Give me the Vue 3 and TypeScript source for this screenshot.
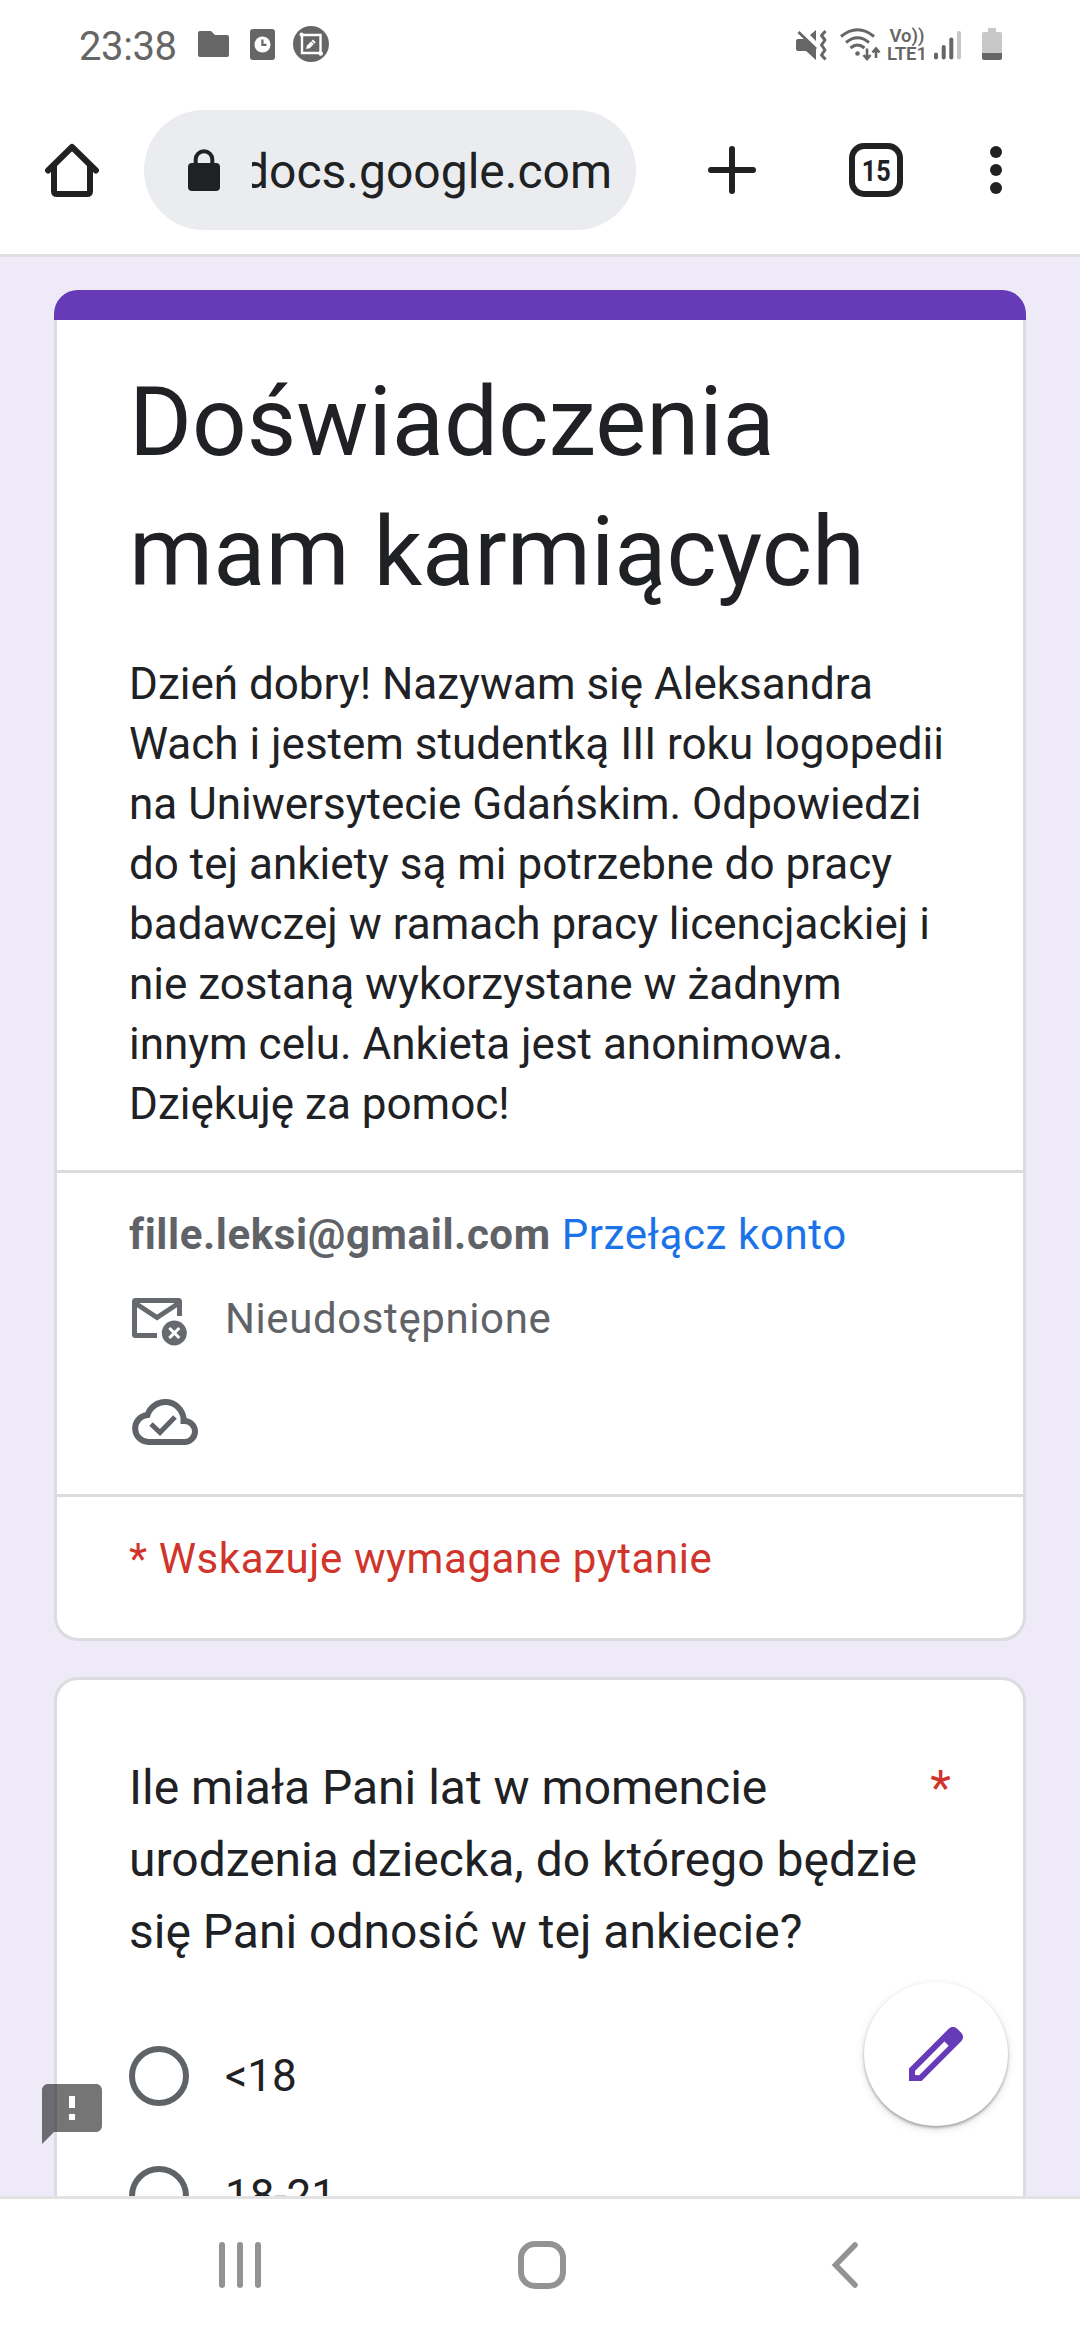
<script setup lang="ts">
const answers: string[] = ['<18', '18-21']
const tabCount = 15
</script>

<template>
  <div class="screen">
    <header class="status">
      <span class="clock">23:38</span>
      <svg class="folder" width="31" height="26" viewBox="0 0 31 26">
        <path d="M2 0H13L17 4H29Q31 4 31 6V24Q31 26 29 26H2Q0 26 0 24V2Q0 0 2 0Z" fill="#666" />
      </svg>
      <svg class="file" width="25" height="31" viewBox="0 0 25 31">
        <rect width="25" height="31" rx="3" fill="#666" />
        <circle cx="12.5" cy="15.5" r="8" fill="#fff" />
        <path d="M12.4 10.5V15.8H16.5" fill="none" stroke="#666" stroke-width="2.2" />
      </svg>
      <svg class="crop" width="36" height="36" viewBox="0 0 36 36">
        <circle cx="18" cy="18" r="18" fill="#666" />
        <path d="M7 9H27.5V27M9 7V27H28" fill="none" stroke="#fff" stroke-width="2.4" />
        <circle cx="8.5" cy="8.5" r="2" fill="#fff" />
        <circle cx="27.7" cy="27.5" r="2.3" fill="#fff" />
        <path d="M13 23L14 19.5L20 13.5L22.7 16.2L16.7 22.2Z" fill="#fff" />
        <path d="M18.3 15.2L21 17.9" stroke="#666" stroke-width="1" />
      </svg>
      <span class="spacer"></span>
      <svg class="mute" width="32" height="32" viewBox="0 0 32 32">
        <path d="M0 12Q0 10 2 10H8L20 19V31L10 22H2Q0 22 0 20ZM14 6L20 1V12Z" fill="#666" />
        <path d="M2.5 3L20 20" stroke="#666" stroke-width="2.8" />
        <path d="M29.5 2L25.5 6.5L29 11L25.5 16L29 21L25.5 26L29.5 30.5" fill="none" stroke="#666" stroke-width="3" stroke-linejoin="round" />
      </svg>
      <svg class="wifi" width="41" height="34" viewBox="0 0 41 34">
        <g fill="none" stroke="#666" stroke-width="3">
          <path d="M1 8.5Q17.5 -5 34 8.5" />
          <path d="M6 14.5Q17.5 5 29 14.5" />
          <path d="M10.5 20Q17.5 14 24.5 20" />
        </g>
        <circle cx="17.5" cy="25.5" r="2.3" fill="#666" />
        <path d="M27 20.5V31M23.5 27L27 31L30.5 27M36 30V20.5M32.5 24.5L36 20.5L39.5 24.5" fill="none" stroke="#666" stroke-width="2.6" />
      </svg>
      <div class="lte"><span>Vo))</span><span>LTE1</span></div>
      <svg class="signal" width="27" height="29" viewBox="0 0 27 29">
        <g fill="#666">
          <rect y="21.5" width="4" height="7" rx="2" />
          <rect x="7.7" y="14" width="4" height="14.5" rx="2" />
          <rect x="15.3" y="6.5" width="4" height="22" rx="2" />
        </g>
        <rect x="23" y="0" width="4" height="28.5" rx="2" fill="#c6c6c6" />
      </svg>
      <svg class="battery" width="20" height="32" viewBox="0 0 20 32">
        <path d="M6 0H14V4H18.500Q20 4 20 6V25H0V6Q0 4 1.500 4H6Z" fill="#c8c8c8" />
        <path d="M0 25H20V30Q20 32 18 32H2Q0 32 0 30Z" fill="#666" />
      </svg>
    </header>

    <div class="toolbar">
      <svg class="home" width="54" height="54" viewBox="0 0 54 54">
        <path d="M3 27.500L27 4L51 27.500" fill="none" stroke="#202122" stroke-width="6" stroke-linecap="round" stroke-linejoin="round" />
        <path d="M9 23V48Q9 51 12 51H42Q45 51 45 48V23" fill="none" stroke="#202122" stroke-width="6" />
      </svg>
      <div class="address">
        <svg width="32" height="42" viewBox="0 0 32 42">
          <path d="M7.700 16V10.500A8.300 8.300 0 0 1 24.300 10.500V16" fill="none" stroke="#202122" stroke-width="4" />
          <rect y="14" width="32" height="28" rx="4" fill="#202122" />
        </svg>
        <div class="url"><span>docs.google.com</span></div>
      </div>
      <svg class="plus" width="48" height="48" viewBox="0 0 48 48">
        <path d="M24 3V45M3 24H45" stroke="#202122" stroke-width="6" stroke-linecap="round" />
      </svg>
      <div class="tabs"><span>{{ tabCount }}</span></div>
      <div class="more"><i></i><i></i><i></i></div>
    </div>

    <main class="page">
      <section class="card">
        <div class="accent"></div>
        <div class="intro">
          <h1>Doświadczenia<br />mam karmiących</h1>
          <p>
            Dzień dobry! Nazywam się Aleksandra<br />
            Wach i jestem studentką III roku logopedii<br />
            na Uniwersytecie Gdańskim. Odpowiedzi<br />
            do tej ankiety są mi potrzebne do pracy<br />
            badawczej w ramach pracy licencjackiej i<br />
            nie zostaną wykorzystane w żadnym<br />
            innym celu. Ankieta jest anonimowa.<br />
            Dziękuję za pomoc!
          </p>
        </div>
        <div class="account">
          <div class="user"><b>fille.leksi@gmail.com</b><a>Przełącz konto</a></div>
          <div class="shared">
            <svg width="60" height="54" viewBox="0 0 60 54">
              <path d="M50.500 24V9.500Q50.500 8.500 49.500 8.500H6.500Q5.500 8.500 5.500 9.500V42.500Q5.500 43.500 6.500 43.500H28" fill="none" stroke="#666a6e" stroke-width="5" />
              <path d="M6 11L28 25.500L50 11" fill="none" stroke="#666a6e" stroke-width="5" />
              <circle cx="45.300" cy="41" r="12.500" fill="#666a6e" />
              <path d="M40.300 36L50.300 46M50.300 36L40.300 46" stroke="#fff" stroke-width="3" />
            </svg>
            <span>Nieudostępnione</span>
          </div>
          <svg class="cloud" width="72" height="60" viewBox="0 0 72 60">
            <path d="M55.500 51H19.500A13.500 13.500 0 0 1 18.500 24.050A18.500 18.500 0 0 1 54.500 27V30H55.500A10.500 10.500 0 0 1 55.500 51Z" fill="none" stroke="#5f6368" stroke-width="6" />
            <path d="M22 34.500L31 43L46 27.500" transform="translate(0 -1.500)" fill="none" stroke="#5f6368" stroke-width="5" />
          </svg>
        </div>
        <div class="required">* Wskazuje wymagane pytanie</div>
      </section>

      <section class="card question">
        <div class="prompt">
          <h2>Ile miała Pani lat w momencie<br />urodzenia dziecka, do którego będzie<br />się Pani odnosić w tej ankiecie?</h2>
          <span class="star">*</span>
        </div>
        <div class="answers">
          <label v-for="answer in answers" :key="answer"><i></i><span>{{ answer }}</span></label>
        </div>
      </section>
    </main>

    <footer class="nav">
      <div class="recents"><i></i><i></i><i></i></div>
      <div class="home-button"></div>
      <svg width="27" height="48" viewBox="0 0 27 48">
        <path d="M24 4L4.500 24L24 44" fill="none" stroke="#939393" stroke-width="5.500" stroke-linecap="round" />
      </svg>
    </footer>

    <svg class="feedback" width="72" height="72" viewBox="0 0 24 24">
      <path d="M20 2H4c-1.100 0-2 .9-2 2v18l4-4h14c1.100 0 2-.9 2-2V4c0-1.100-.9-2-2-2z" fill="#000" fill-opacity=".54" />
      <path d="M11 6h2v4h-2zM11 12h2v2h-2z" fill="#fff" />
    </svg>
    <button class="fab">
      <svg width="72" height="72" viewBox="0 0 24 24">
        <path d="M20.410 4.940l-1.350-1.350c-.78-.78-2.050-.78-2.830 0L3 16.820V21h4.180L20.410 7.770c.79-.78.79-2.050 0-2.830zM6.410 19.060L5 19v-1.360l9.820-9.820 1.410 1.410-9.820 9.830z" fill="#673ab7" />
      </svg>
    </button>
  </div>
</template>

<style>
body {
  margin: 0;
  background: #fff;
}
</style>

<style scoped>
.screen {
  position: relative;
  display: flex;
  flex-direction: column;
  width: 1080px;
  height: 2340px;
  overflow: hidden;
  background: #fff;
  color: #202124;
  font-family: Roboto, sans-serif;
  box-sizing: border-box;
}
svg {
  display: block;
  flex: none;
}
.status {
  display: flex;
  align-items: flex-start;
  height: 86px;
  padding: 0 78px 0 79px;
  box-sizing: border-box;
}
.clock {
  width: 119px;
  padding-top: 23px;
  line-height: 47px;
  font-size: 40px;
  letter-spacing: -0.4px;
  color: #666;
}
.folder { margin-top: 31px; }
.file { margin: 29px 0 0 21px; }
.crop { margin: 26px 0 0 18px; }
.spacer { flex: 1; }
.mute { margin-top: 29px; }
.wifi { margin: 28px 0 0 12px; }
.lte {
  display: flex;
  flex-direction: column;
  align-items: center;
  width: 40px;
  margin: 28px 7px 0 6px;
  color: #666;
  font-size: 18.500px;
  line-height: 17.500px;
  font-weight: 600;
  white-space: nowrap;
}
.signal { margin-top: 31px; }
.battery { margin: 28px 0 0 21px; }

.toolbar {
  display: flex;
  align-items: center;
  height: 168px;
  border-bottom: 3px solid #e0e0e2;
  padding-left: 45px;
}
.address {
  display: flex;
  align-items: center;
  width: 492px;
  height: 120px;
  margin-left: 45px;
  padding-left: 44px;
  border-radius: 60px;
  background: #ebecf0;
  box-sizing: border-box;
}
.url {
  display: flex;
  justify-content: flex-end;
  width: 360px;
  margin: 3px 0 0 32px;
  overflow: hidden;
  font-size: 48px;
  line-height: 64px;
  color: #202122;
}
.plus { margin-left: 72px; }
.tabs {
  display: flex;
  align-items: center;
  justify-content: center;
  width: 54px;
  height: 54px;
  margin-left: 93px;
  border: 6px solid #202122;
  border-radius: 15px;
  box-sizing: border-box;
  font-size: 30px;
  font-weight: 700;
  color: #202122;
}
.tabs span { transform: scaleX(0.84); }
.more {
  display: flex;
  flex-direction: column;
  gap: 6px;
  margin-left: 87px;
}
.more i {
  width: 12px;
  height: 12px;
  border-radius: 50%;
  background: #202122;
}

.page {
  flex: 1;
  min-height: 0;
  overflow: hidden;
  padding: 33px 54px 0;
  background: #eeeaf8;
}
.card {
  border: 3px solid #dadce0;
  border-radius: 24px;
  background: #fff;
}
.accent {
  height: 30px;
  margin: -3px -3px 0;
  border-radius: 24px 24px 0 0;
  background: #673ab7;
}
.intro {
  height: 850px;
  padding: 37px 0 0 72px;
  box-sizing: border-box;
  white-space: nowrap;
}
h1 {
  margin: 0;
  font-size: 96px;
  line-height: 130px;
  font-weight: 400;
}
p {
  margin: 37px 0 0;
  font-size: 44px;
  line-height: 60px;
}
.account {
  height: 288px;
  padding: 33px 0 0 72px;
  border-top: 3px solid #dadcde;
  border-bottom: 3px solid #dadcde;
  color: #5f6368;
}
.user {
  display: flex;
  gap: 11px;
  font-size: 42px;
  line-height: 57px;
  letter-spacing: 0.6px;
}
.user a {
  color: #1a73e8;
}
.shared {
  display: flex;
  height: 57px;
  margin-top: 27px;
  font-size: 42px;
  line-height: 57px;
  letter-spacing: 0.6px;
}
.shared svg { margin-top: 2px; }
.shared span { margin-left: 36px; }
.cloud { margin-top: 44px; }
.required {
  height: 141px;
  padding: 33px 0 0 72px;
  box-sizing: border-box;
  font-size: 42px;
  line-height: 57px;
  letter-spacing: 0.6px;
  color: #d0342a;
}
.question {
  height: 900px;
  margin-top: 36px;
  padding: 0 72px;
}
.prompt {
  display: flex;
  justify-content: space-between;
  padding-top: 72px;
}
h2 {
  margin: 0;
  font-size: 48px;
  line-height: 72px;
  font-weight: 400;
  white-space: nowrap;
}
.star {
  font-size: 48px;
  line-height: 72px;
  color: #d0342a;
}
.answers {
  margin-top: 78px;
}
.answers label {
  display: flex;
  align-items: center;
  height: 60px;
  margin-bottom: 60px;
  font-size: 44px;
}
.answers i {
  width: 60px;
  height: 60px;
  margin-right: 36px;
  border: 6px solid #5f6368;
  border-radius: 50%;
  box-sizing: border-box;
}

.nav {
  display: flex;
  flex: none;
  height: 144px;
  padding: 43px 222px 0 219px;
  border-top: 3px solid #e2e2e2;
  box-sizing: border-box;
  justify-content: space-between;
  align-items: flex-start;
}
.recents {
  display: flex;
  gap: 12px;
}
.recents i {
  width: 6px;
  height: 46px;
  border-radius: 3px;
  background: #939393;
}
.home-button {
  width: 48px;
  height: 48px;
  margin: -1px 8px 0 0;
  border: 6px solid #939393;
  border-radius: 17px;
  box-sizing: border-box;
}
.nav svg { margin-top: -1px; }

.feedback {
  position: absolute;
  left: 36px;
  top: 2078px;
}
.fab {
  position: absolute;
  left: 864px;
  top: 1982px;
  display: flex;
  align-items: center;
  justify-content: center;
  width: 144px;
  height: 144px;
  padding: 0;
  border: 0;
  border-radius: 50%;
  background: #fff;
  box-shadow: 0 2px 3px rgba(0, 0, 0, 0.3), 0 3px 9px 1px rgba(0, 0, 0, 0.1);
}
</style>
